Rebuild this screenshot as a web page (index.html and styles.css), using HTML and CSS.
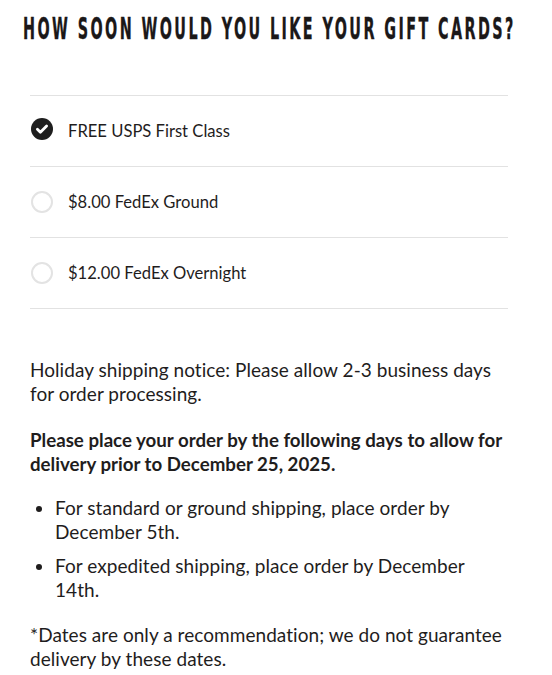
FILE: index.html
```html
<!DOCTYPE html>
<html lang="en">
<head>
<meta charset="utf-8">
<title>Gift card shipping</title>
<link rel="stylesheet" href="styles.css">
</head>
<body>
<main class="page">
  <h1 class="title"><span class="title-text">How soon would you like your gift cards?</span></h1>
  <ul class="options">
    <li class="option option--checked">
      <span class="radio radio--checked">
        <svg viewBox="0 0 22 22" width="22" height="22"><circle cx="11" cy="11" r="11" fill="#1e1e1e"/><path d="M6.4 11.2l3 3 6.2-6.2" fill="none" stroke="#fff" stroke-width="2.8" stroke-linecap="round" stroke-linejoin="round"/></svg>
      </span>
      <span class="option-label">FREE USPS First Class</span>
    </li>
    <li class="option">
      <span class="radio"></span>
      <span class="option-label">$8.00 FedEx Ground</span>
    </li>
    <li class="option">
      <span class="radio"></span>
      <span class="option-label">$12.00 FedEx Overnight</span>
    </li>
  </ul>
  <div class="notice">
    <p class="intro">Holiday shipping notice: Please allow 2-3 business days for order processing.</p>
    <p class="strong">Please place your order by the following days to allow for delivery prior to December 25, 2025.</p>
    <ul class="dates">
      <li>For standard or ground shipping, place order by December 5th.</li>
      <li>For expedited shipping, place order by December 14th.</li>
    </ul>
    <p>*Dates are only a recommendation; we do not guarantee delivery by these dates.</p>
  </div>
</main>
</body>
</html>
```
FILE: styles.css
```css
* { box-sizing: border-box; }
html, body { margin: 0; padding: 0; background: #fff; }
body {
  font-family: Lato, "Open Sans", sans-serif;
  color: #1f1d1d;
}
.page {
  padding: 0 44px 0 30px;
}
.title {
  margin: 12px -44px 0 -7px;
  font-family: "DejaVu Sans", sans-serif;
  font-weight: 700;
  font-size: 30px;
  line-height: 34px;
  letter-spacing: 5px;
  text-transform: uppercase;
  color: #1b1818;
  white-space: nowrap;
  overflow: hidden;
}
.title-text {
  display: inline-block;
  transform: scaleX(0.479);
  transform-origin: 0 50%;
  -webkit-text-stroke: 0.4px #1b1818;
}
.options {
  list-style: none;
  margin: 49px 0 0;
  padding: 0;
}
.option {
  display: flex;
  align-items: center;
  gap: 15px;
  height: 71px;
  border-top: 1px solid #e2e2e2;
  padding-left: 1px;
  font-size: 16.6px;
}
.option:last-child { border-bottom: 1px solid #e2e2e2; height: 72px; }
.radio {
  width: 22px;
  height: 22px;
  flex: none;
  border-radius: 50%;
  border: 2px solid #e3e3e3;
  display: block;
}
.radio--checked { border: 0; margin-top: -4px; }
.radio svg { display: block; }
.notice {
  margin-top: 49px;
  font-size: 19px;
  line-height: 24px;
  letter-spacing: 0.05px;
}
.notice p { margin: 0 0 20px; }
.notice .intro { margin-bottom: 22px; }
.notice .strong { font-weight: 700; font-size: 18.7px; margin-bottom: 20px; letter-spacing: 0; }
.dates {
  margin: 0 0 21px;
  padding-left: 25px;
}
.dates li { margin-bottom: 10px; }
.dates li:last-child { margin-bottom: 0; }
```
